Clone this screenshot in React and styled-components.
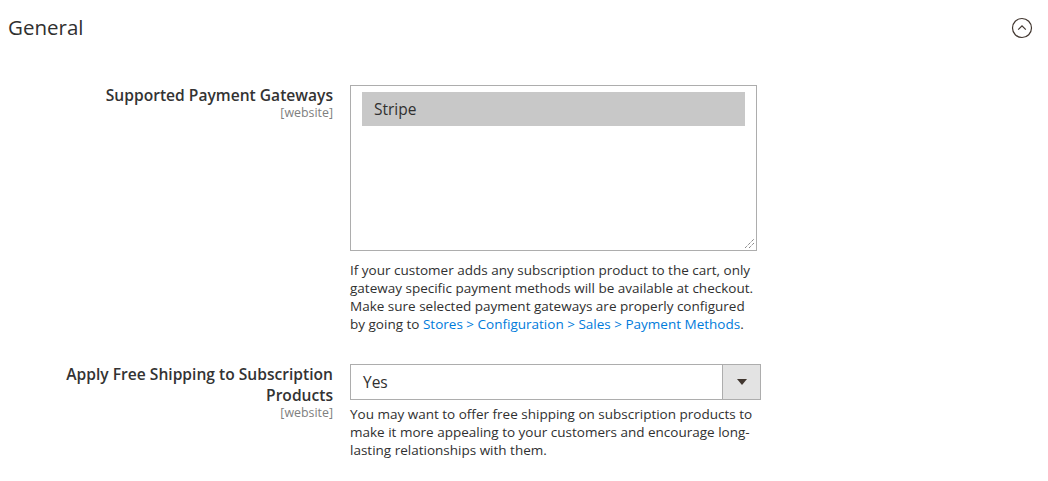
import React from "react";
import styled, { createGlobalStyle } from "styled-components";

const Global = createGlobalStyle`
  html, body { margin: 0; padding: 0; background: #fff; }
  body { font-family: "Open Sans", "Liberation Sans", sans-serif; color: #303030; }
  * { box-sizing: border-box; }
`;

const Page = styled.div`
  width: 1048px;
  padding: 0 0 0 8px;
`;

const SectionHeader = styled.div`
  display: flex;
  align-items: center;
  justify-content: space-between;
  height: 52px;
  padding-right: 15px;
`;

const Title = styled.h2`
  margin: 0;
  font-size: 20.5px;
  font-weight: 400;
  color: #303030;
  line-height: 1;
  position: relative;
  top: 1px;
`;

const Toggle = styled.button`
  border: 0;
  background: none;
  padding: 0;
  width: 22px;
  height: 22px;
  display: flex;
  align-items: center;
  justify-content: center;
  cursor: pointer;
  position: relative;
  top: 2px;
`;

const Fieldset = styled.div`
  display: flex;
  flex-direction: column;
  gap: 31px;
  padding-top: 33px;
`;

const Row = styled.div`
  display: grid;
  grid-template-columns: 325px 411px;
  column-gap: 17px;
  align-items: start;
`;

const LabelCol = styled.div`
  text-align: right;
  padding-left: 50px;
`;

const Label = styled.label`
  display: block;
  font-size: 15.6px;
  font-weight: 600;
  line-height: 21px;
  color: #333333;
`;

const Scope = styled.span`
  display: block;
  font-size: 12.4px;
  line-height: 12px;
  margin-top: 1px;
  color: #808080;
`;

const Control = styled.div`
  display: flex;
  flex-direction: column;
`;

const MultiBox = styled.div`
  position: relative;
  width: 407px;
  height: 166px;
  border: 1px solid #adadad;
  background: #fff;
  padding: 6px 11px 0 11px;
`;

const Option = styled.div`
  height: 34px;
  line-height: 34px;
  padding-left: 12px;
  font-size: 15.5px;
  color: #303030;
  background: ${(p) => (p.$selected ? "#c8c8c8" : "transparent")};
`;

const Grip = styled.svg`
  position: absolute;
  right: 1px;
  bottom: 1px;
`;

const Note = styled.div`
  font-size: 13.5px;
  line-height: 18px;
  color: #303030;
  margin-top: ${(p) => p.$gap}px;
  width: 411px;
`;

const Link = styled.a`
  color: #007bdb;
  text-decoration: none;
`;

const Select = styled.div`
  display: flex;
  width: 411px;
  height: 36px;
  border: 1px solid #adadad;
  background: #fff;
`;

const SelectValue = styled.div`
  flex: 1;
  padding-left: 12px;
  font-size: 15.5px;
  line-height: 34px;
  color: #303030;
`;

const SelectButton = styled.div`
  width: 38px;
  background: #e3e3e3;
  border-left: 1px solid #adadad;
  display: flex;
  align-items: center;
  justify-content: center;
`;

export default function App() {
  return (
    <Page>
      <Global />
      <SectionHeader>
        <Title>General</Title>
        <Toggle aria-label="Collapse">
          <svg width="22" height="22" viewBox="0 0 22 22">
            <circle cx="11" cy="11" r="9.5" fill="none" stroke="#41362f" strokeWidth="1.2" />
            <path d="M7.2 12.6 L11 8.8 L14.8 12.6" fill="none" stroke="#41362f" strokeWidth="1.2" />
          </svg>
        </Toggle>
      </SectionHeader>
      <Fieldset>
        <Row>
          <LabelCol>
            <Label>Supported Payment Gateways</Label>
            <Scope>[website]</Scope>
          </LabelCol>
          <Control>
            <MultiBox>
              <Option $selected>Stripe</Option>
              <Grip width="12" height="12" viewBox="0 0 12 12">
                <path d="M2 11 L11 2 M6 11 L11 6" stroke="#555" strokeWidth="1" strokeDasharray="1 1" />
              </Grip>
            </MultiBox>
            <Note $gap={10}>
              If your customer adds any subscription product to the cart, only gateway specific
              payment methods will be available at checkout. Make sure selected payment gateways
              are properly configured by going to{" "}
              <Link href="#">Stores &gt; Configuration &gt; Sales &gt; Payment Methods</Link>.
            </Note>
          </Control>
        </Row>
        <Row>
          <LabelCol>
            <Label>Apply Free Shipping to Subscription Products</Label>
            <Scope>[website]</Scope>
          </LabelCol>
          <Control>
            <Select>
              <SelectValue>Yes</SelectValue>
              <SelectButton>
                <svg width="10" height="6" viewBox="0 0 10 6">
                  <path d="M0 0 L10 0 L5 6 Z" fill="#41362f" />
                </svg>
              </SelectButton>
            </Select>
            <Note $gap={5}>
              You may want to offer free shipping on subscription products to make it more
              appealing to your customers and encourage long-lasting relationships with them.
            </Note>
          </Control>
        </Row>
      </Fieldset>
    </Page>
  );
}
